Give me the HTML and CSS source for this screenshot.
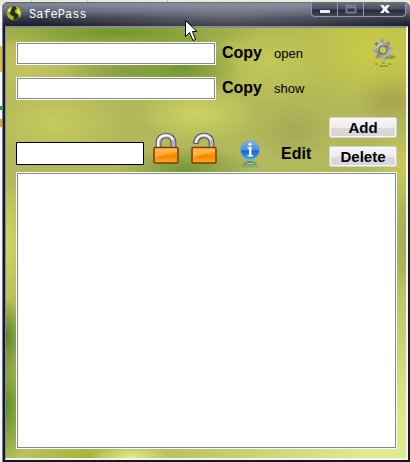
FILE: index.html
```
<!DOCTYPE html>
<html lang="en">

<head>
    <meta charset="UTF-8">
    <meta name="viewport" content="width=device-width, initial-scale=1.0">
    <title>SafePass</title>
    <link rel="stylesheet" href="styles.css">
</head>

<body>
    <div class="window">
        <header class="title-bar">
            <svg class="app-icon" width="16" height="16" viewBox="0 0 16 16" aria-hidden="true">
                <circle cx="8" cy="8" r="7" fill="#2c3018" stroke="#8c962c" stroke-width=".6"/>
                <path d="M1 8C1 5 3 2 6 1.500L6.500 3L4.500 4.500L5.500 5.500L4 7L3.500 9L6 10.500L8 12L7 15C3 14.500 1 11 1 8Z" fill="#a9b62c"/>
                <path d="M9.500 1.200C13 2 15 5 15 8C15 10 14 12 13 13L12.500 10L11 8.500L9.500 8L9 5.500L11 4Z" fill="#c3d02e"/>
                <path d="M2 7L3 4L5 3L4 6Z" fill="#f0f2b4"/>
                <path d="M12 4L14 7L13 9L11.500 6Z" fill="#e2ea66"/>
            </svg>
            <h1 class="title">SafePass</h1>
            <div class="window-controls">
                <button type="button" class="control" aria-label="Minimize">
                    <svg width="12" height="12" viewBox="0 0 12 12"><rect x="1" y="7" width="10" height="3" fill="#eceef2"/></svg>
                </button>
                <button type="button" class="control" aria-label="Maximize">
                    <svg width="12" height="12" viewBox="0 0 12 12"><path d="M1.500 2.500H10.500V9.500H1.500ZM2 4H10" fill="none" stroke="#767a87" stroke-width="2"/></svg>
                </button>
                <button type="button" class="control control-close" aria-label="Close">
                    <svg width="12" height="12" viewBox="0 0 12 12"><path d="M1 2H4.500L6 4L7.500 2H11L7.800 6L11 10H7.500L6 8L4.500 10H1L4.200 6Z" fill="#f4f4f6"/></svg>
                </button>
            </div>
        </header>

        <main class="content">
            <!-- Account and password -->
            <section class="credentials">
                <div class="credential-rows">
                    <div class="credential-row">
                        <input type="text" class="field" aria-label="Account">
                        <button type="button" class="btn-text copy">Copy</button>
                        <button type="button" class="btn-text small">open</button>
                    </div>
                    <div class="credential-row">
                        <input type="text" class="field" aria-label="Password">
                        <button type="button" class="btn-text copy">Copy</button>
                        <button type="button" class="btn-text small">show</button>
                    </div>
                </div>
                <button type="button" class="btn-icon settings" aria-label="Settings">
                    <svg width="26" height="32" viewBox="0 0 26 32">
                        <defs>
                            <linearGradient id="steel" gradientUnits="userSpaceOnUse" x1="3" y1="2" x2="21" y2="22">
                                <stop offset="0" stop-color="#4d5156"/>
                                <stop offset=".3" stop-color="#a9acb0"/>
                                <stop offset=".5" stop-color="#85888c"/>
                                <stop offset=".75" stop-color="#b4b6b8"/>
                                <stop offset="1" stop-color="#55595e"/>
                            </linearGradient>
                        </defs>
                        <ellipse cx="17" cy="19" rx="8" ry="2" fill="#5d6020" opacity=".45"/>
                        <g fill="none" stroke="url(#steel)">
                            <circle cx="12" cy="12" r="5.700" stroke-width="3.400"/>
                            <path d="M11.500 5.500L11 1.500M16 6.500L18.500 4M18.500 11L22 11M17 16L19.500 18.500M12.500 18.500L13 22.500M8 17.500L5.500 20M5.500 13L2 13M7 7.500L4.500 5" stroke-width="3.200"/>
                        </g>
                        <circle cx="12" cy="12" r="4" fill="none" stroke="#494d51" stroke-width=".8"/>
                        <path d="M5.800 10Q7 6 11.500 5.500" fill="none" stroke="#dfe0e1"/>
                        <path d="M4 26H7M11 25H14M17 26H20M8 28H17" stroke="#666b38" stroke-width="2" opacity=".4"/>
                    </svg>
                </button>
            </section>

            <!-- Search and entry actions -->
            <section class="toolbar">
                <div class="toolbar-main">
                    <input type="text" class="field search" aria-label="Search">
                    <button type="button" class="btn-icon lock" aria-label="Lock">
                        <svg width="26" height="33" viewBox="0 0 26 33">
                            <defs>
                                <linearGradient id="brass" x1="0" y1="0" x2="0" y2="1">
                                    <stop offset="0" stop-color="#ffa62c"/>
                                    <stop offset=".45" stop-color="#ff930a"/>
                                    <stop offset=".55" stop-color="#f98200"/>
                                    <stop offset="1" stop-color="#ffae14"/>
                                </linearGradient>
                            </defs>
                            <path d="M5.500 16V11C5.500 1 20.500 1 20.500 11V16" fill="none" stroke="#44465a" stroke-width="5.600"/>
                            <path d="M5.500 16V11C5.500 1 20.500 1 20.500 11V16" fill="none" stroke="#b4b6c8" stroke-width="3.800"/>
                            <path d="M5 16V11C5 1.500 18 1.500 20 8" fill="none" stroke="#f8f8ff" stroke-width="1.800"/>
                            <rect x="1" y="15.500" width="24" height="15.500" rx="1" fill="url(#brass)" stroke="#7c3a10" stroke-width="1.500"/>
                            <path d="M2 16.500H24V20Q13 21 2 26Z" fill="#ffd06a" opacity=".5"/>
                        </svg>
                    </button>
                    <button type="button" class="btn-icon unlock" aria-label="Unlock">
                        <svg width="26" height="33" viewBox="0 0 26 33">
                            <path d="M5 11.800V10.500C6 1 20.500 1 20.500 11V16" fill="none" stroke="#44465a" stroke-width="5.600"/>
                            <path d="M5 11V10.500C6 1 20.500 1 20.500 11V16" fill="none" stroke="#b4b6c8" stroke-width="3.800"/>
                            <path d="M4.800 10.500C6 1.500 18 1.500 20 8" fill="none" stroke="#f8f8ff" stroke-width="1.800"/>
                            <rect x="1" y="15.500" width="24" height="15.500" rx="1" fill="url(#brass)" stroke="#7c3a10" stroke-width="1.500"/>
                            <path d="M2 16.500H24V20Q13 21 2 26Z" fill="#ffd06a" opacity=".5"/>
                        </svg>
                    </button>
                    <button type="button" class="btn-icon info" aria-label="Information">
                        <svg width="20" height="29" viewBox="0 0 20 29">
                            <defs>
                                <linearGradient id="glass" x1="0" y1="0" x2="0" y2="1">
                                    <stop offset="0" stop-color="#85b4ec"/>
                                    <stop offset=".5" stop-color="#4a8ade"/>
                                    <stop offset=".55" stop-color="#1763cf"/>
                                    <stop offset="1" stop-color="#32a3ee"/>
                                </linearGradient>
                                <linearGradient id="mirror" x1="0" y1="0" x2="0" y2="1">
                                    <stop offset="0" stop-color="#2a82a0" stop-opacity=".9"/>
                                    <stop offset="1" stop-color="#4f90a0" stop-opacity=".1"/>
                                </linearGradient>
                            </defs>
                            <circle cx="10" cy="10" r="9.500" fill="url(#glass)" stroke="#78a3d2"/>
                            <circle cx="10" cy="4.300" r="1.600" fill="#fff"/>
                            <path d="M7.500 7H11.500V15H13V16.500H7.500V15H9V8.500H7.500Z" fill="#fff"/>
                            <path d="M1 28Q3 21 10 21Q17 21 19 28Z" fill="url(#mirror)"/>
                            <path d="M7 23.500H13" stroke="#b9d6c0" opacity=".7"/>
                        </svg>
                    </button>
                    <button type="button" class="btn-text edit">Edit</button>
                </div>
                <div class="entry-buttons">
                    <button type="button" class="btn">Add</button>
                    <button type="button" class="btn">Delete</button>
                </div>
            </section>

            <select class="entry-list" size="10" aria-label="Entries"></select>
        </main>
    </div>

    <svg class="pointer" width="14" height="22" viewBox="0 0 14 22" aria-hidden="true">
        <path d="M.5 .5V16.500L4.500 12.500L8 20.500L10.500 19.500L7.500 11.500H12Z" fill="#fff" stroke="#000"/>
    </svg>
</body>

</html>
```

FILE: styles.css
```
* {
    box-sizing: border-box;
}

body {
    margin: 0;
    padding: 2px 0 0 2px;
    height: 100vh;
    min-height: 320px;
    background:
        linear-gradient(#1d9c2e, #1d9c2e) 0 106px / 2px 4px no-repeat,
        linear-gradient(#e0a030, #e0a030) 0 119px / 2px 8px no-repeat,
        linear-gradient(#d8bd45, #d8bd45) 0 46px / 2px 26px no-repeat,
        linear-gradient(#c8c5b5, #c8c5b5) 31px 0 / 1px 2px no-repeat,
        linear-gradient(#c8c5b5, #c8c5b5) 87px 0 / 1px 2px no-repeat,
        linear-gradient(#c8c5b5, #c8c5b5) 167px 0 / 1px 2px no-repeat,
        linear-gradient(#ece9d8, #ece9d8) 0 0 / 100% 6px no-repeat,
        #f4f8fc;
    font-family: "Liberation Sans", Arial, sans-serif;
    color: #000;
}

button,
input,
select {
    font-family: inherit;
    color: inherit;
}

button {
    margin: 0;
    padding: 0;
    border: none;
    background: none;
    cursor: pointer;
}

.window {
    display: flex;
    flex-direction: column;
    height: 100%;
    padding: 0 2px 2px 2px;
    background: #151725;
    border-left: 1px solid #767e98;
    border-radius: 6px 6px 0 0;
    overflow: hidden;
}

.title-bar {
    display: flex;
    flex: none;
    height: 24px;
    margin: 0 -2px;
    padding: 0 4px 0 3px;
    background:
        radial-gradient(ellipse 190px 26px at 55% 60%, rgba(165, 165, 170, 0.4), transparent),
        linear-gradient(#59617b, #858a9b 2px, #5f6476 10px, #343847 16px, #1b1e2c 24px);
}

.app-icon {
    margin-top: 3px;
}

.title {
    margin: 0 0 0 7px;
    font-family: "Liberation Mono", monospace;
    font-size: 12px;
    line-height: 26px;
    font-weight: 400;
    color: #fff;
}

.window-controls {
    display: flex;
    height: 15px;
    margin-left: auto;
    border: 1px solid #9296a2;
    border-top: none;
    border-radius: 0 0 4px 4px;
    background: linear-gradient(#6b7080 0, #4a4f5e 7px, #262a39 8px, #434859 14px);
}

.control {
    display: flex;
    align-items: center;
    justify-content: center;
    width: 26px;
    border-right: 1px solid #9296a2;
}

.control-close {
    width: 41px;
    border-right: none;
}

.content {
    display: flex;
    flex-direction: column;
    flex: 1;
    min-height: 0;
    padding: 14px 9px 9px 10px;
    border-style: solid;
    border-width: 2px 2px 2px 1px;
    border-color: #8d8e8a #f4f4ec #f4f4ec #8d8e8a;
    /* out-of-focus foliage */
    background:
        radial-gradient(ellipse 60px 34px at 44% 9%, rgba(104, 146, 44, 0.9), transparent),
        radial-gradient(ellipse 150px 20px at 28% 1%, rgba(108, 148, 40, 0.95), transparent),
        radial-gradient(ellipse 60px 24px at 30% 10%, rgba(112, 148, 54, 0.7), transparent),
        radial-gradient(ellipse 50px 40px at 6% 9%, rgba(200, 200, 100, 0.8), transparent),
        radial-gradient(ellipse 60px 40px at 66% 8%, rgba(200, 204, 88, 0.8), transparent),
        radial-gradient(ellipse 90px 60px at 92% 5%, rgba(204, 204, 70, 0.95), transparent),
        radial-gradient(ellipse 60px 30px at 48% 20%, rgba(208, 214, 98, 0.9), transparent),
        radial-gradient(ellipse 70px 40px at 12% 22%, rgba(200, 204, 92, 0.9), transparent),
        radial-gradient(ellipse 36px 26px at 96% 16%, rgba(156, 150, 76, 0.8), transparent),
        radial-gradient(ellipse 40px 30px at 72% 24%, rgba(162, 160, 84, 0.7), transparent),
        radial-gradient(ellipse 70px 24px at 45% 33%, rgba(110, 146, 48, 0.9), transparent),
        radial-gradient(ellipse 40px 40px at 100% 32%, rgba(208, 206, 88, 0.8), transparent),
        radial-gradient(ellipse 20px 40px at 0 72%, rgba(88, 128, 40, 0.95), transparent),
        radial-gradient(ellipse 24px 60px at 0 88%, rgba(92, 140, 40, 0.95), transparent),
        radial-gradient(ellipse 24px 70px at 0 50%, rgba(206, 218, 96, 0.95), transparent),
        radial-gradient(ellipse 40px 14px at 31% 100%, rgba(226, 240, 142, 0.95), transparent),
        radial-gradient(ellipse 60px 30px at 20% 100%, rgba(160, 182, 52, 0.9), transparent),
        radial-gradient(ellipse 20px 50px at 100% 50%, rgba(162, 166, 84, 0.8), transparent),
        radial-gradient(ellipse 240px 190px at 100% 100%, rgba(220, 234, 144, 1) 20%, transparent),
        linear-gradient(#b2b854, #b2b85e 40%, #b8c25e);
}

.credentials {
    display: flex;
    align-items: flex-start;
    margin-bottom: 17px;
}

.credential-rows {
    display: flex;
    flex-direction: column;
    flex: 1;
    gap: 12px;
}

.credential-row {
    display: flex;
    align-items: center;
}

.field {
    width: 200px;
    height: 23px;
    padding: 1px 4px;
    background: #fff;
    border: 1px solid #fff;
    border-radius: 0;
    box-shadow: inset 0 0 0 1px #82879a;
    font-size: 13px;
}

.btn-text {
    font-size: 16px;
    line-height: 20px;
    font-weight: 700;
}

.btn-text.small {
    font-size: 13px;
    font-weight: 400;
}

.copy {
    margin: 0 12px 2px 6px;
}

.btn-icon svg {
    display: block;
}

.settings {
    margin-top: -4px;
    margin-bottom: -4px;
}

.toolbar {
    display: flex;
    align-items: flex-end;
    justify-content: space-between;
    margin-bottom: 5px;
}

.toolbar-main {
    display: flex;
    align-items: flex-end;
    padding-bottom: 2px;
}

.search {
    width: 128px;
    border-color: #000;
    box-shadow: none;
}

.lock {
    margin-left: 9px;
}

.unlock {
    margin-left: 12px;
}

.info {
    margin: 0 0 -4px 23px;
}

.edit {
    margin-left: 21px;
    line-height: 23px;
}

.entry-buttons {
    display: flex;
    flex-direction: column;
    gap: 8px;
}

.btn {
    width: 68px;
    height: 21px;
    border: 1px solid #d0d2c8;
    border-radius: 2px;
    background: linear-gradient(#f6f6f6 0, #ececec 50%, #dadada 51%, #d6d6d6 100%);
    box-shadow: inset 0 0 0 1px #f8f8f8;
    font-size: 15px;
    line-height: 18px;
    font-weight: 700;
}

.entry-list {
    flex: 1;
    width: 100%;
    min-height: 60px;
    padding: 1px;
    background: #fff;
    border: 1px solid #fff;
    border-radius: 0;
    box-shadow: inset 0 0 0 1px #82879a;
    font-size: 13px;
}

.pointer {
    position: absolute;
    top: 20px;
    left: 185px;
}
```
